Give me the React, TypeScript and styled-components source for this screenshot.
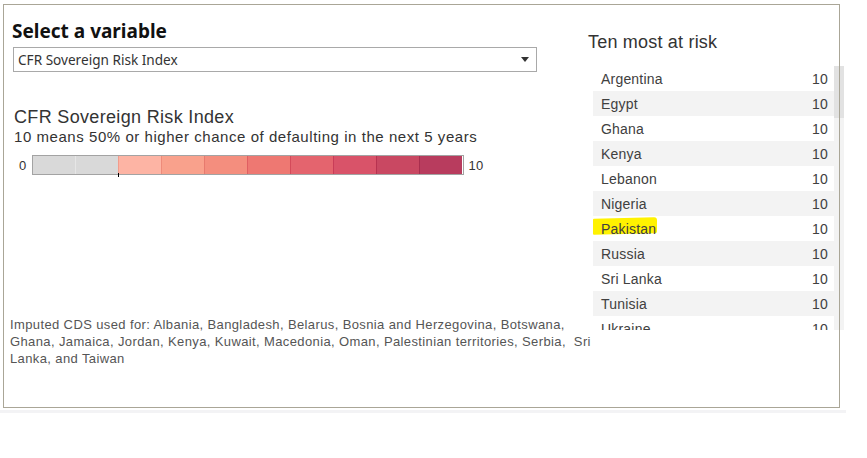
import React from 'react';
import styled, { createGlobalStyle } from 'styled-components';

const Global = createGlobalStyle`
  html, body { margin: 0; padding: 0; background: #fff; }
  body { font-family: "Liberation Sans", Arial, sans-serif; }
`;

const Page = styled.div`
  width: 867px;
  height: 458px;
  overflow: hidden;
`;

const Frame = styled.div`
  position: relative;
  box-sizing: border-box;
  margin: 4px 0 0 3px;
  width: 837px;
  height: 404px;
  padding: 1px;
  display: grid;
  grid-template-columns: 584px 250px;
  &::after {
    content: '';
    position: absolute;
    inset: 0;
    border: 1px solid #aaa697;
    pointer-events: none;
    z-index: 2;
  }
`;

const Strip = styled.div`
  margin-top: 2px;
  width: 846px;
  height: 3px;
  background: #f3f3f5;
`;

const LeftCol = styled.div`
  display: flex;
  flex-direction: column;
  align-items: flex-start;
  padding-top: 14px;
`;

const Title = styled.h1`
  margin: 0 0 4px 8px;
  font-family: "Noto Sans", "Open Sans", sans-serif;
  font-weight: 700;
  font-size: 19px;
  line-height: 24px;
  color: #111;
`;

const Select = styled.div`
  box-sizing: border-box;
  margin-left: 9px;
  width: 524px;
  height: 25px;
  border: 1px solid #a9a9a9;
  display: flex;
  align-items: center;
  justify-content: space-between;
  padding: 0 7px 0 4px;
  font-family: "Noto Sans", "Open Sans", sans-serif;
  font-size: 13.6px;
  color: #333;
`;

const Arrow = styled.span`
  width: 0;
  height: 0;
  border-left: 4px solid transparent;
  border-right: 4px solid transparent;
  border-top: 5px solid #333;
`;

const Header = styled.div`
  margin: 35px 0 0 10px;
  font-size: 18px;
  line-height: 20px;
  letter-spacing: 0.33px;
  color: #333;
`;

const Sub = styled.div`
  margin: 1px 0 0 10px;
  font-size: 15px;
  line-height: 17px;
  letter-spacing: 0.55px;
  color: #333;
`;

const LegendRow = styled.div`
  margin: 10px 0 0 15px;
  display: flex;
  align-items: center;
  gap: 5px;
  font-size: 13px;
  letter-spacing: 0.3px;
  color: #333;
`;

const Bar = styled.div`
  box-sizing: border-box;
  width: 432px;
  height: 20px;
  border: 1px solid #a3a3a3;
  display: flex;
`;

const Segment = styled.div<{ $bg: string; $line: string; $first?: boolean; $tick?: boolean }>`
  position: relative;
  flex: 1;
  background: ${(p) => p.$bg};
  border-left: ${(p) => (p.$first ? 'none' : `1px solid ${p.$line}`)};
  &::before {
    content: '';
    display: ${(p) => (p.$tick ? 'block' : 'none')};
    position: absolute;
    left: -1px;
    bottom: -3px;
    width: 1px;
    height: 4px;
    background: #000;
  }
`;

const Note = styled.div`
  margin: 141px 0 0 6px;
  width: 582px;
  font-size: 13px;
  line-height: 17px;
  letter-spacing: 0.38px;
  color: #555;
  white-space: pre-wrap;
`;

const RightCol = styled.div`
  padding-top: 27px;
`;

const RightTitle = styled.div`
  margin: 0 0 14px 0;
  font-size: 18px;
  line-height: 20px;
  letter-spacing: 0.2px;
  color: #333;
`;

const ListWrap = styled.div`
  margin-left: 5px;
  width: 251px;
  height: 264px;
  display: flex;
`;

const List = styled.div`
  width: 241px;
  height: 264px;
  overflow: hidden;
`;

const Row = styled.div<{ $alt: boolean }>`
  position: relative;
  box-sizing: border-box;
  height: 25px;
  display: flex;
  align-items: center;
  justify-content: space-between;
  padding: 0 6px 0 8px;
  background: ${(p) => (p.$alt ? '#f3f3f3' : '#fff')};
  font-size: 14px;
  letter-spacing: 0.2px;
  color: #404040;
`;

const Marker = styled.span`
  position: absolute;
  left: 0;
  top: 2px;
  width: 64px;
  height: 16px;
  background: #fff200;
  border-radius: 1px 3px 2px 1px;
  transform: skewY(-1.5deg);
`;

const Name = styled.span`
  position: relative;
  z-index: 1;
`;

const Value = styled.span`
  position: relative;
  z-index: 1;
`;

const Track = styled.div`
  width: 10px;
  height: 264px;
  background: #f3f3f3;
`;

const Thumb = styled.div`
  height: 52px;
  background: #e2e2e2;
`;

const segments = [
  { bg: '#d9d9d9', line: '#e6e6e6' },
  { bg: '#d9d9d9', line: '#e6e6e6' },
  { bg: '#fdb4a4', line: '#f29c8c' },
  { bg: '#f9a18c', line: '#ee8b7a' },
  { bg: '#f48e7e', line: '#e77a6e' },
  { bg: '#ee7872', line: '#e05f62' },
  { bg: '#e4646e', line: '#d44a5a' },
  { bg: '#d95369', line: '#c93d58' },
  { bg: '#c94862', line: '#b73250' },
  { bg: '#b83c5e', line: '#a82e4e' },
];

const countries = [
  'Argentina',
  'Egypt',
  'Ghana',
  'Kenya',
  'Lebanon',
  'Nigeria',
  'Pakistan',
  'Russia',
  'Sri Lanka',
  'Tunisia',
  'Ukraine',
];

const noteText =
  'Imputed CDS used for: Albania, Bangladesh, Belarus, Bosnia and Herzegovina, Botswana, Ghana, Jamaica, Jordan, Kenya, Kuwait, Macedonia, Oman, Palestinian territories, Serbia,  Sri Lanka, and Taiwan';

export default function App() {
  return (
    <Page>
      <Global />
      <Frame>
        <LeftCol>
          <Title>Select a variable</Title>
          <Select>
            <span>CFR Sovereign Risk Index</span>
            <Arrow />
          </Select>
          <Header>CFR Sovereign Risk Index</Header>
          <Sub>10 means 50% or higher chance of defaulting in the next 5 years</Sub>
          <LegendRow>
            <span>0</span>
            <Bar>
              {segments.map((s, i) => (
                <Segment key={i} $bg={s.bg} $line={s.line} $first={i === 0} $tick={i === 2} />
              ))}
            </Bar>
            <span>10</span>
          </LegendRow>
          <Note>{noteText}</Note>
        </LeftCol>
        <RightCol>
          <RightTitle>Ten most at risk</RightTitle>
          <ListWrap>
            <List>
              {countries.map((c, i) => (
                <Row key={c} $alt={i % 2 === 1}>
                  {c === 'Pakistan' && <Marker />}
                  <Name>{c}</Name>
                  <Value>10</Value>
                </Row>
              ))}
            </List>
            <Track>
              <Thumb />
            </Track>
          </ListWrap>
        </RightCol>
      </Frame>
      <Strip />
    </Page>
  );
}
